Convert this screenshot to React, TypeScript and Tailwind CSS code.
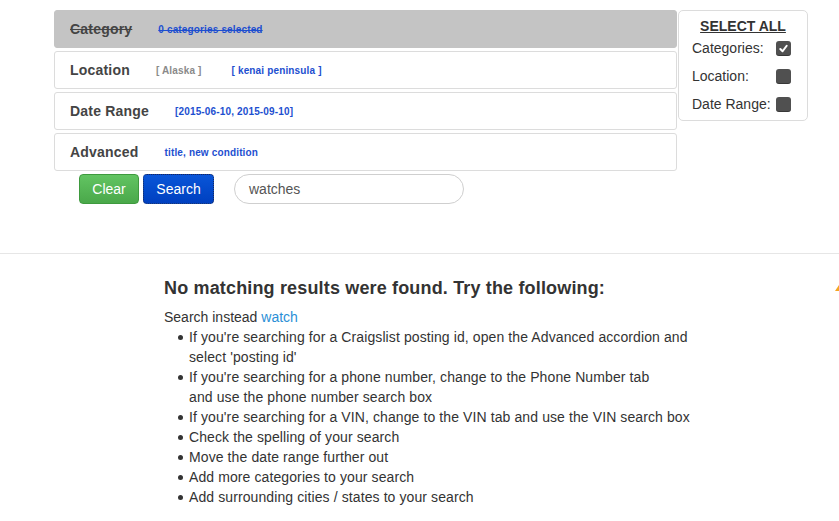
import React from "react";

type Panel = {
  title: string;
  values: { text: string; tone: "gray" | "blue" }[];
  active?: boolean;
};

const PANELS: Panel[] = [
  { title: "Category", values: [{ text: "0 categories selected", tone: "blue" }], active: true },
  {
    title: "Location",
    values: [
      { text: "[ Alaska ]", tone: "gray" },
      { text: "[ kenai peninsula ]", tone: "blue" },
    ],
  },
  { title: "Date Range", values: [{ text: "[2015-06-10, 2015-09-10]", tone: "blue" }] },
  { title: "Advanced", values: [{ text: "title, new condition", tone: "blue" }] },
];

const TIPS: string[][] = [
  ["If you're searching for a Craigslist posting id, open the Advanced accordion and", "select 'posting id'"],
  ["If you're searching for a phone number, change to the Phone Number tab", "and use the phone number search box"],
  ["If you're searching for a VIN, change to the VIN tab and use the VIN search box"],
  ["Check the spelling of your search"],
  ["Move the date range further out"],
  ["Add more categories to your search"],
  ["Add surrounding cities / states to your search"],
];

function Checkbox({ checked }: { checked?: boolean }) {
  return (
    <span className="flex h-[15px] w-[15px] items-center justify-center rounded-[3px] bg-[#505050] shadow-[inset_0_-1px_0_rgba(0,0,0,0.3)]">
      {checked && (
        <svg width="11" height="11" viewBox="0 0 12 12" fill="none" stroke="#fff" strokeWidth="2.2" strokeLinecap="round" strokeLinejoin="round">
          <path d="M2.5 6.5 5 9l4.5-6" />
        </svg>
      )}
    </span>
  );
}

export default function App() {
  return (
    <div className="relative min-h-[521px] bg-white font-['Liberation_Sans',Arial,sans-serif] text-[#333]">
      {/* filter area */}
      <div className="flex pl-[54px] pt-[10px]">
        <div className="w-[623px]">
          <div className="flex flex-col gap-[3px]">
            {PANELS.map((p) => (
              <div
                key={p.title}
                className={`flex h-[38px] items-center rounded-[3px] border pl-[15px] ${
                  p.active ? "border-[#c4c4c4] bg-[#c4c4c4]" : "border-[#dcdcdc] bg-white"
                }`}
              >
                <span className={`text-[14px] font-bold tracking-[0.2px] text-[#444] ${p.active ? "line-through" : ""}`}>
                  {p.title}
                </span>
                {p.values.map((v, i) => (
                  <span
                    key={i}
                    className={`text-[10px] font-bold tracking-[0.15px] ${i === 0 ? "ml-[26px]" : "ml-[30px]"} ${
                      v.tone === "gray" ? "text-[#8a8a8a]" : "text-[#1d4fd0]"
                    } ${p.active ? "line-through" : ""}`}
                  >
                    {v.text}
                  </span>
                ))}
              </div>
            ))}
          </div>
          <div className="mt-[3px] flex items-center pl-[25px]">
            <button
              type="button"
              className="h-[30px] w-[60px] rounded-[4px] border border-[#3e9a3e] bg-gradient-to-b from-[#62c462] to-[#4aa84a] text-[14px] text-white"
            >
              Clear
            </button>
            <button
              type="button"
              className="ml-[4px] h-[30px] w-[71px] rounded-[4px] border border-dotted border-[#1a2a5a] bg-gradient-to-b from-[#0a55d8] to-[#0040c0] text-[14px] text-white"
            >
              Search
            </button>
            <div className="ml-[20px] flex h-[30px] w-[230px] items-center rounded-full border border-[#cfcfcf] pl-[14px] text-[14px] text-[#555]">
              watches
            </div>
          </div>
        </div>
        <div className="ml-px h-[111px] w-[130px] rounded-[5px] border border-[#dcdcdc] pt-[5px]">
          <div className="text-center text-[14px] font-bold text-[#333] underline">SELECT ALL</div>
          <div className="mt-[2px] flex flex-col gap-[9px] pl-[13px] text-[14px] text-[#333]">
            <div className="flex h-[19px] items-center">
              <span className="w-[84px]">Categories:</span>
              <Checkbox checked />
            </div>
            <div className="flex h-[19px] items-center">
              <span className="w-[84px]">Location:</span>
              <Checkbox />
            </div>
            <div className="flex h-[19px] items-center">
              <span className="w-[84px]">Date Range:</span>
              <Checkbox />
            </div>
          </div>
        </div>
      </div>

      <div className="mt-[49px] border-t border-[#e6e6e6]" />

      {/* results */}
      <div className="pl-[164px] pt-[24px]">
        <h2 className="text-[18px] font-bold leading-[20px] tracking-[0.16px] text-[#333]">
          No matching results were found. Try the following:
        </h2>
        <div className="mt-[9px] text-[14px] leading-[20px]">
          Search instead <span className="text-[#2a8fd6]">watch</span>
        </div>
        <ul className="text-[14px] leading-[20px] tracking-[0.1px]">
          {TIPS.map((lines, i) => (
            <li key={i} className="flex">
              <span className="flex w-[25px] justify-end pr-[6px] pt-[8px]">
                <span className="h-[5px] w-[5px] rounded-full bg-[#333]" />
              </span>
              <span>
                {lines.map((l, j) => (
                  <div key={j}>{l}</div>
                ))}
              </span>
            </li>
          ))}
        </ul>
      </div>

      <div className="absolute left-[835px] top-[285px] h-0 w-0 border-b-[6px] border-l-[4px] border-b-[#f5a623] border-l-transparent" />
    </div>
  );
}
